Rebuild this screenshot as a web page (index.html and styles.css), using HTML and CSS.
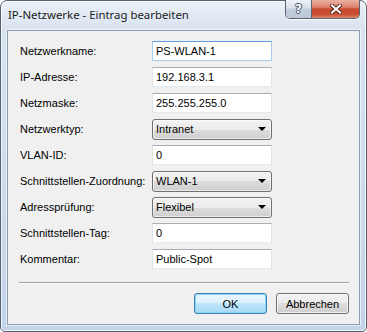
FILE: index.html
```html
<!DOCTYPE html>
<html lang="de">
<head>
    <meta charset="UTF-8">
    <title>IP-Netzwerke - Eintrag bearbeiten</title>
    <link rel="stylesheet" href="styles.css">
</head>
<body>

    <div class="window">
        <div class="titlebar">
            <span class="title">IP-Netzwerke - Eintrag bearbeiten</span>
            <div class="caption-buttons">
                <span class="cap-btn help">?</span>
                <span class="cap-btn close">
                    <svg width="12" height="10" viewBox="0 0 12 10">
                        <path d="M2 1.5 L10 8.5 M10 1.5 L2 8.5" stroke="#5b2a20" stroke-width="4" stroke-linecap="square"/>
                        <path d="M2 1.5 L10 8.5 M10 1.5 L2 8.5" stroke="#ffffff" stroke-width="2" stroke-linecap="square"/>
                    </svg>
                </span>
            </div>
        </div>

        <div class="client">
            <div class="form">
                <label>Netzwerkname:</label>
                <input type="text" class="focused" value="PS-WLAN-1">

                <label>IP-Adresse:</label>
                <input type="text" value="192.168.3.1">

                <label>Netzmaske:</label>
                <input type="text" value="255.255.255.0">

                <label>Netzwerktyp:</label>
                <div class="combo"><span>Intranet</span><span class="arrow"></span></div>

                <label>VLAN-ID:</label>
                <input type="text" value="0">

                <label>Schnittstellen-Zuordnung:</label>
                <div class="combo"><span>WLAN-1</span><span class="arrow"></span></div>

                <label>Adressprüfung:</label>
                <div class="combo"><span>Flexibel</span><span class="arrow"></span></div>

                <label>Schnittstellen-Tag:</label>
                <input type="text" value="0">

                <label>Kommentar:</label>
                <input type="text" value="Public-Spot">
            </div>

            <div class="separator"></div>

            <div class="buttons">
                <button class="default">OK</button>
                <button>Abbrechen</button>
            </div>
        </div>
    </div>

</body>
</html>
```

FILE: styles.css
```css
* {
    box-sizing: border-box;
}

body {
    margin: 0;
    background-color: #ffffff;
    font-family: "Liberation Sans", Arial, sans-serif;
    font-size: 11px;
    color: #000000;
}

.window {
    display: flex;
    flex-direction: column;
    width: 367px;
    height: 332px;
    border: 1px solid #56616f;
    border-radius: 7px 7px 5px 5px;
    background: linear-gradient(to bottom, #eaf0f7 0, #d8e3f0 30px, #c2d4e9 100%);
    box-shadow: inset 0 0 0 1px rgba(255, 255, 255, 0.75);
}

/* title bar */
.titlebar {
    display: flex;
    height: 29px;
    flex-shrink: 0;
}

.title {
    padding: 6px 0 0 7px;
    font-family: "Noto Sans", "Open Sans", sans-serif;
    font-size: 11.4px;
    color: #1a1a1a;
}

.caption-buttons {
    display: flex;
    margin: -1px 6px 0 auto;
    height: 19px;
    border: 1px solid #5a6475;
    border-top: none;
    border-radius: 0 0 5px 5px;
    overflow: hidden;
    box-shadow: 0 1px 0 rgba(255, 255, 255, 0.8);
}

.cap-btn {
    display: flex;
    justify-content: center;
    align-items: center;
    height: 100%;
}

.help {
    width: 26px;
    border-right: 1px solid #5a6475;
    background: linear-gradient(to bottom, #eef2f7 0, #d8e0ea 45%, #c3cfdd 50%, #bac8d8 100%);
    font-family: "DejaVu Sans", sans-serif;
    font-weight: bold;
    font-size: 12px;
    color: #ffffff;
    text-shadow: 0 0 1px #3b4757, 1px 0 0 #4b5666, -1px 0 0 #4b5666, 0 1px 0 #4b5666, 0 -1px 0 #4b5666;
}

.close {
    width: 47px;
    background: linear-gradient(to bottom, #eab3a5 0, #dd826b 40%, #c8492e 50%, #c94f34 80%, #dc8a6d 100%);
}

/* client area */
.client {
    flex: 1;
    margin: 0 6px 6px;
    background-color: #f0f0f0;
    border: 1px solid #8c9bb0;
    box-shadow: 0 0 0 1px rgba(255, 255, 255, 0.6);
}

.form {
    display: grid;
    grid-template-columns: 132px 120px;
    grid-auto-rows: 26px;
    align-items: center;
    padding: 7px 0 0 12px;
}

label {
    white-space: nowrap;
}

input {
    width: 120px;
    height: 20px;
    padding: 0 3px;
    margin: 0;
    font-family: "Liberation Sans", Arial, sans-serif;
    font-size: 11px;
    color: #000000;
    background: #ffffff;
    border: 1px solid #e2e3ea;
    border-top-color: #abadb3;
    border-bottom-color: #e3e9ef;
    border-radius: 0;
    outline: none;
}

input.focused {
    border-color: #a9cbee;
    border-top-color: #5c9ddb;
}

.combo {
    display: flex;
    align-items: center;
    justify-content: space-between;
    height: 21px;
    padding: 0 5px 0 3px;
    border: 1px solid #707070;
    border-radius: 3px;
    background: linear-gradient(to bottom, #f2f2f2 0, #ebebeb 50%, #dddddd 50%, #cfcfcf 100%);
    box-shadow: inset 0 0 0 1px rgba(255, 255, 255, 0.6);
}

.arrow {
    width: 0;
    height: 0;
    border-left: 4px solid transparent;
    border-right: 4px solid transparent;
    border-top: 4px solid #000000;
}

.separator {
    margin: 10px 10px 0 11px;
    height: 2px;
    border-top: 1px solid #a0a0a0;
    border-bottom: 1px solid #ffffff;
}

.buttons {
    display: flex;
    justify-content: flex-end;
    gap: 9px;
    margin: 9px 10px 0 0;
}

button {
    width: 73px;
    height: 21px;
    padding: 0;
    font-family: "Liberation Sans", Arial, sans-serif;
    font-size: 11px;
    color: #000000;
    border: 1px solid #707070;
    border-radius: 3px;
    background: linear-gradient(to bottom, #f2f2f2 0, #ebebeb 50%, #dddddd 50%, #cfcfcf 100%);
    box-shadow: inset 0 0 0 1px rgba(255, 255, 255, 0.7);
}

button.default {
    border-color: #3c7fb1;
    background: linear-gradient(to bottom, #eaf6fd 0, #d9f0fc 50%, #bee6fd 50%, #a7d9f5 100%);
    box-shadow: inset 0 0 0 1px #8ed3f7;
}
```
